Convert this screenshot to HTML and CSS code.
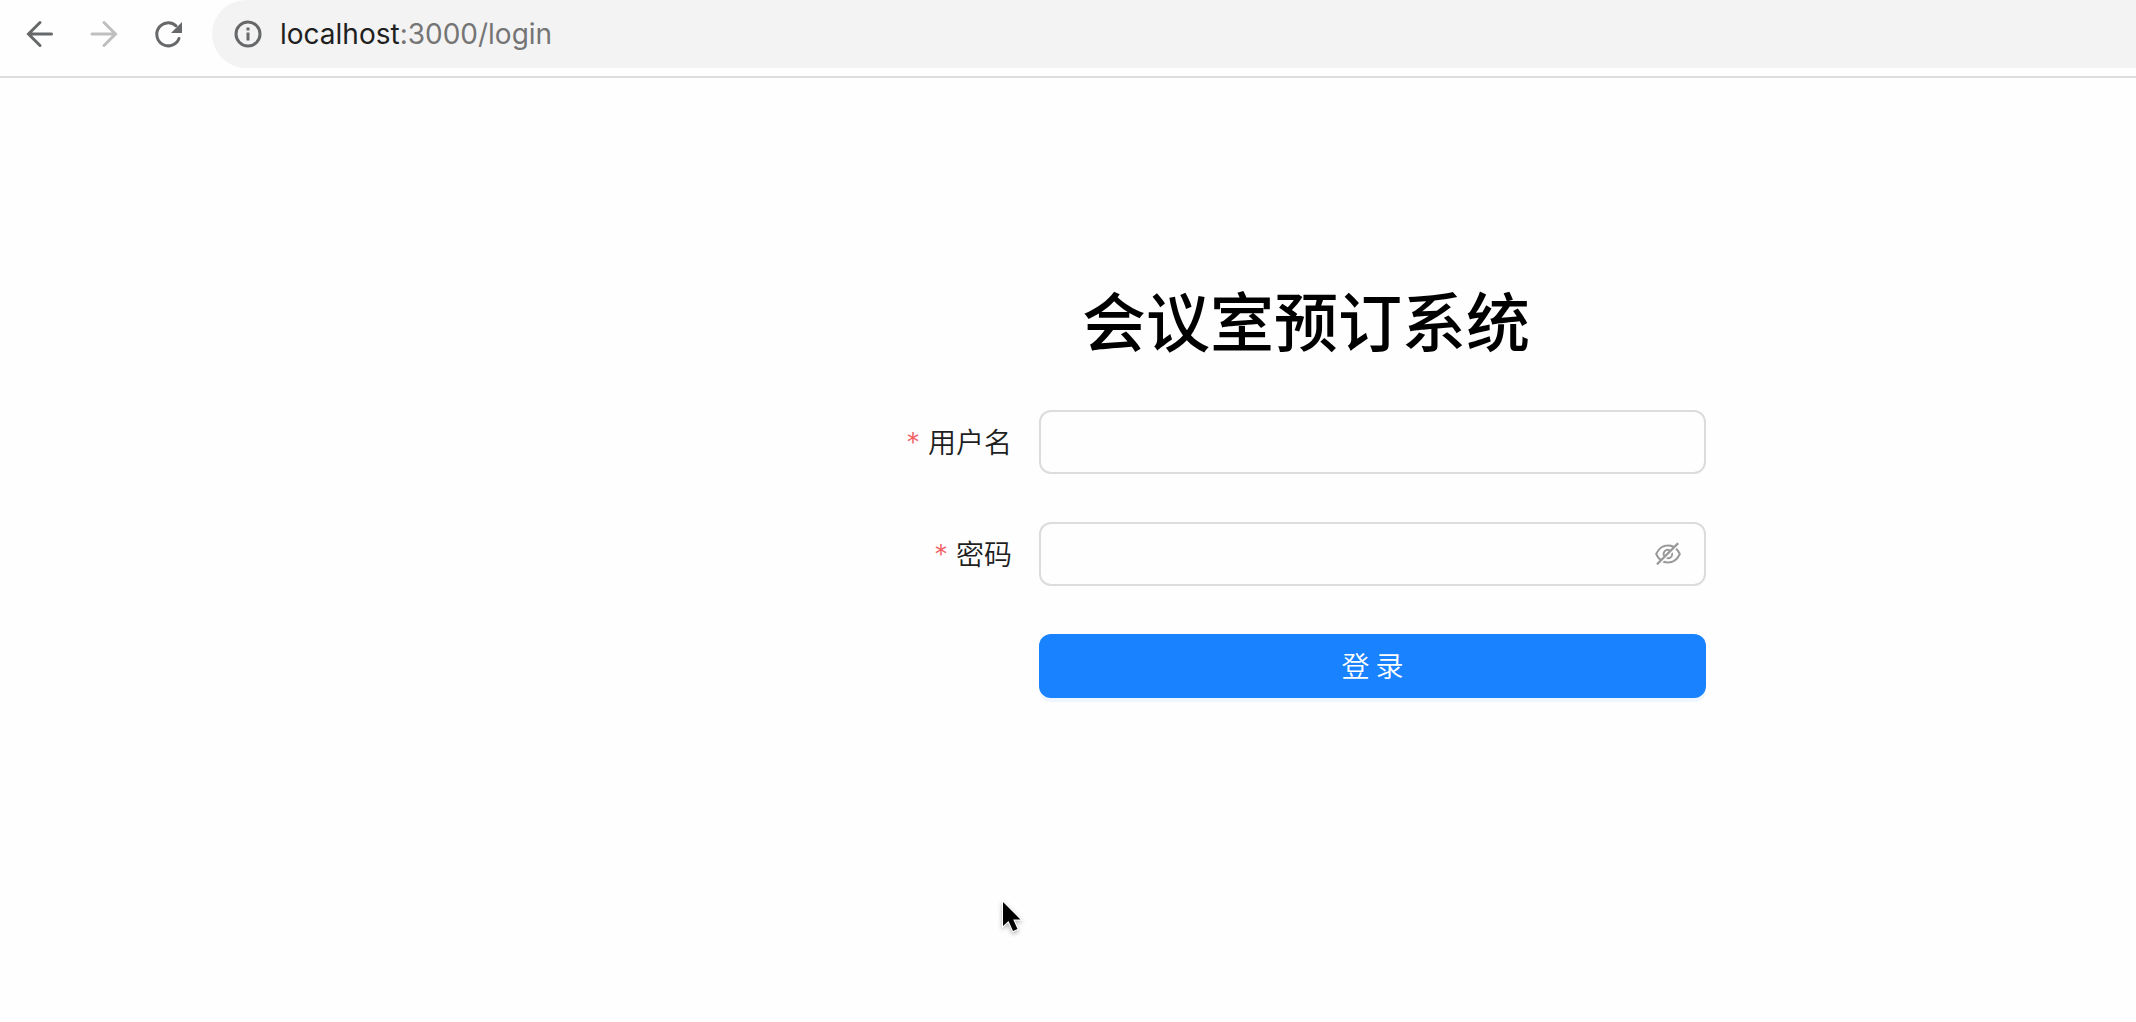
FILE: index.html
```html
<!DOCTYPE html>
<html lang="zh-CN">
<head>
    <meta charset="UTF-8">
    <meta name="viewport" content="width=device-width, initial-scale=1.0">
    <title>会议室预订系统</title>
    <link rel="stylesheet" href="styles.css">
</head>
<body>
    <header class="toolbar">
        <button type="button" class="nav-btn" aria-label="Back">
            <svg width="32" height="32" viewBox="0 0 32 32"><path d="M27.500 16H5M16 4.500L4.500 16L16 27.500"/></svg>
        </button>
        <button type="button" class="nav-btn disabled" aria-label="Forward" disabled>
            <svg width="32" height="32" viewBox="0 0 32 32"><path d="M4 16H27M16 4.500L27.500 16L16 27.500"/></svg>
        </button>
        <button type="button" class="nav-btn" aria-label="Reload">
            <svg width="32" height="32" viewBox="0 0 32 32"><path d="M27 20.500A11.500 11.500 0 1 1 24 7.800"/><path class="solid" d="M30 4V15H19z"/></svg>
        </button>
        <div class="address">
            <svg width="28" height="28" viewBox="0 0 28 28"><circle cx="14" cy="14" r="12"/><path d="M14 12.500V20.500M14 7.500V10.500"/></svg>
            <span class="url"><span class="host">localhost</span>:3000/login</span>
        </div>
    </header>

    <main class="login">
        <h1>会议室预订系统</h1>
        <form>
            <div class="form-item">
                <label for="username">用户名</label>
                <div class="field">
                    <input type="text" id="username" name="username" required>
                </div>
            </div>
            <div class="form-item">
                <label for="password">密码</label>
                <div class="field">
                    <input type="password" id="password" name="password" required>
                    <button type="button" class="eye" aria-label="显示密码">
                        <svg width="30" height="30" viewBox="0 0 1024 1024"><path d="M942.200 486.200Q889.470 375.110 816.700 305l-50.880 50.880C807.310 395.530 843.450 447.400 874.700 512 791.500 684.200 673.400 766 512 766q-72.670 0-133.870-22.380L323 798.750Q408 838 512 838q288.300 0 430.200-300.300a60.290 60.290 0 000-51.500zm-63.570-320.640L836 122.880a8 8 0 00-11.320 0L715.310 232.200Q624.860 186 512 186q-288.300 0-430.200 300.300a60.300 60.300 0 000 51.500q56.690 119.400 136.500 191.410L112.480 835a8 8 0 000 11.310L155.170 889a8 8 0 0011.310 0l712.150-712.120a8 8 0 000-11.320zM149.300 512C232.600 339.800 350.700 258 512 258c54.540 0 104.130 9.360 149.120 28.390l-70.300 70.300a176 176 0 00-238.130 238.130l-83.420 83.420C223.100 637.490 183.300 582.280 149.300 512zm246.700 0a112.110 112.110 0 01146.200-106.690L401.310 546.200A112 112 0 01396 512z"/><path d="M508 624c-3.460 0-6.870-.16-10.250-.47l-52.820 52.820a176.090 176.090 0 00227.420-227.420l-52.820 52.820c.31 3.380.47 6.790.47 10.250a111.940 111.940 0 01-112 112z"/></svg>
                    </button>
                </div>
            </div>
            <div class="form-item">
                <button type="submit" class="submit">登 录</button>
            </div>
        </form>
    </main>

    <svg class="cursor" width="22" height="34" viewBox="0 0 22 34"><path d="M2 2V26L7.500 21L12 31L16.500 29L12.200 19.500H19.500z"/></svg>
</body>
</html>
```
FILE: styles.css
```css
* {
    box-sizing: border-box;
}

body {
    position: relative;
    min-height: 100vh;
    margin: 0;
    background-color: #fefefe;
    color: #1f1f1f;
    font-family: "Noto Sans CJK SC", sans-serif;
    font-size: 28px;
    font-weight: 350;
}

button {
    border: none;
    padding: 0;
    background: none;
    font: inherit;
    cursor: pointer;
}

svg {
    display: block;
}

/* browser bar */
.toolbar {
    display: flex;
    align-items: center;
    gap: 32px;
    padding: 0 0 8px 24px;
    border-bottom: 2px solid #dddddd;
}

.nav-btn svg,
.address svg {
    fill: none;
    stroke: #66686a;
    stroke-width: 3;
}

.nav-btn svg {
    stroke-linecap: round;
}

.nav-btn.disabled svg {
    stroke: #bfbfbf;
}

.nav-btn .solid {
    fill: #66686a;
    stroke: none;
}

.address {
    display: flex;
    flex: 1;
    align-items: center;
    gap: 18px;
    height: 68px;
    padding-left: 22px;
    margin-left: -4px;
    border-radius: 34px 0 0 34px;
    background-color: #f3f3f3;
}

.url {
    color: #757575;
    font-family: Inter, sans-serif;
    font-weight: 400;
}

.host {
    color: #1f1f1f;
}

/* login form */
.login {
    width: 800px;
    margin: 194px 430px 0 auto;
}

h1 {
    margin: 0 0 46px;
    color: #000000;
    font-size: 64px;
    font-weight: 500;
    line-height: 92px;
    text-align: center;
}

.form-item {
    display: flex;
    justify-content: flex-end;
    align-items: center;
    margin-bottom: 48px;
}

.form-item label {
    display: flex;
    align-items: center;
    gap: 8px;
    height: 64px;
    padding-bottom: 2px;
    margin-right: 27px;
}

.form-item label::before {
    content: "*";
    padding-top: 4px;
    color: #f26165;
    font-family: Inter, sans-serif;
}

.field {
    position: relative;
    width: 667px;
}

.field input {
    display: block;
    width: 100%;
    height: 64px;
    padding: 8px 22px;
    border: 2px solid #dcdcdc;
    border-radius: 12px;
    outline: none;
    background-color: #fefefe;
    color: #1f1f1f;
    font: inherit;
}

.eye {
    position: absolute;
    top: 17px;
    right: 23px;
}

.eye svg {
    fill: #999999;
}

.submit {
    width: 667px;
    height: 64px;
    padding-bottom: 2px;
    border-radius: 12px;
    background-color: #1882ff;
    box-shadow: 0 4px 0 #eef6ff;
    color: #ffffff;
}

.cursor {
    position: absolute;
    top: 900px;
    left: 1001px;
    fill: #000000;
    stroke: #ffffff;
    stroke-width: 2;
    paint-order: stroke;
    filter: drop-shadow(0 2px 2px rgba(0, 0, 0, 0.3));
}
```
